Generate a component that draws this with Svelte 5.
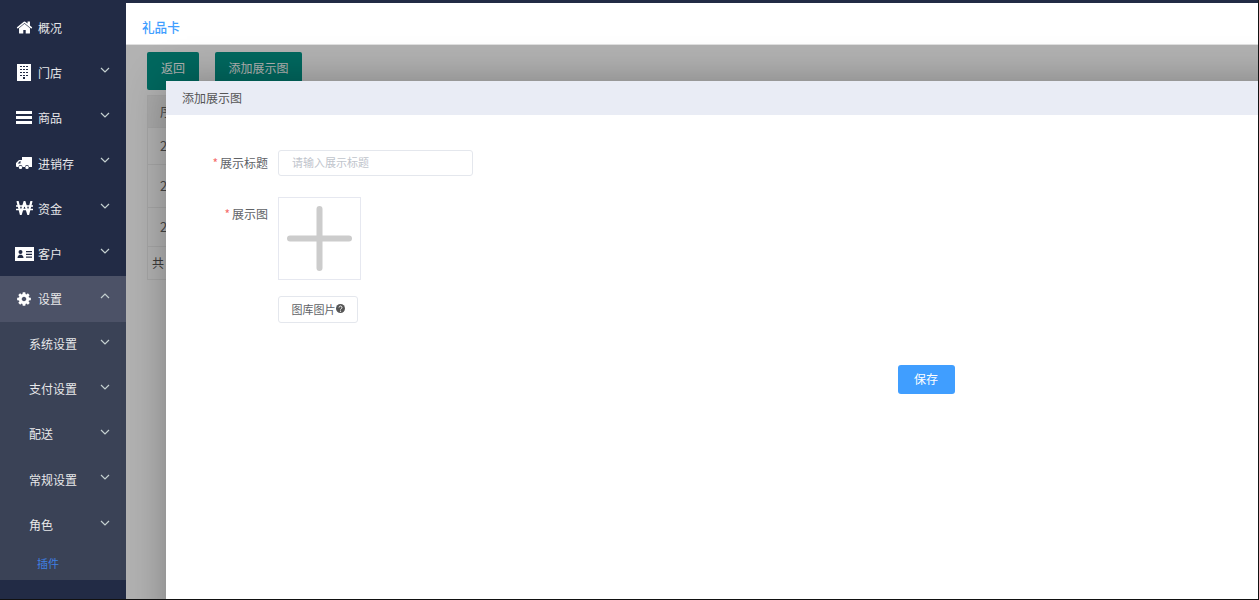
<script>
  const menu = [
    { name: "概况", icon: "home", noArrow: true },
    { name: "门店", icon: "building" },
    { name: "商品", icon: "bars" },
    { name: "进销存", icon: "truck" },
    { name: "资金", icon: "won" },
    { name: "客户", icon: "card" }
  ];
  const subMenu = ["系统设置", "支付设置", "配送", "常规设置", "角色"];
  const cog = "M1152 896q0-106-75-181t-181-75-181 75-75 181 75 181 181 75 181-75 75-181zm512-109v222q0 12-8 23t-20 13l-185 28q-19 54-39 91 35 50 107 138 10 12 10 25t-9 23q-27 37-99 108t-94 71q-12 0-26-9l-138-108q-44 23-91 38-16 136-29 186-7 28-36 28h-222q-14 0-24.5-8.5t-11.5-21.5l-28-184q-49-16-90-37l-141 107q-10 9-25 9-14 0-25-11-126-114-165-168-7-10-7-23 0-12 8-23 15-21 51-66.5t54-70.5q-27-50-41-99l-183-27q-13-2-21-12.5t-8-23.5v-222q0-12 8-23t19-13l186-28q14-46 39-92-40-57-107-138-10-12-10-24 0-10 9-23 26-36 98.5-107.5t94.5-71.5q13 0 26 10l138 107q44-23 91-38 16-136 29-186 7-28 36-28h222q14 0 24.5 8.5t11.5 21.5l28 184q49 16 90 37l142-107q9-9 24-9 13 0 25 10 129 119 165 170 7 8 7 22 0 12-8 23-15 21-51 66.5t-54 70.5q26 50 41 98l183 28q13 2 21 12.5t8 23.5z";
  const home = "M1472 992v480q0 26-19 45t-45 19h-384v-384h-256v384h-384q-26 0-45-19t-19-45v-480q0-1 .5-3t.5-3l575-474 575 474q1 2 1 6zm223-69l-62 74q-8 9-21 11h-3q-13 0-21-7l-692-577-692 577q-12 8-24 7-13-2-21-11l-62-74q-8-10-7-23.5t11-21.5l719-599q32-26 76-26t76 26l244 204v-195q0-14 9-23t23-9h192q14 0 23 9t9 23v408l219 182q10 8 11 21.5t-7 23.5z";
  const rows = ["2", "2", "2"];
</script>

<div class="page">
  <aside class="side">
    {#each menu as item}
      <div class="row">
        <span class="ico">
          {#if item.icon === "home"}
            <svg width="17" height="17" viewBox="0 0 1792 1792"><path fill="#fff" d={home} /></svg>
          {:else if item.icon === "building"}
            <svg width="14" height="17" viewBox="0 0 14 17"><path fill="#fff" fill-rule="evenodd" d="M0 0h14v17H0zM3 2v1h2V2zm3 0v1h2V2zm3 0v1h2V2zM3 5v1h2V5zm3 0v1h2V5zm3 0v1h2V5zM3 8v1h2V8zm3 0v1h2V8zm3 0v1h2V8zM3 11v1h2v-1zm3 0v1h2v-1zm3 0v1h2v-1zM6 13v2h2v-2z" /></svg>
          {:else if item.icon === "bars"}
            <svg width="16" height="13" viewBox="0 0 16 13"><path fill="#fff" d="M0 0h16v3H0zM0 5h16v3H0zM0 10h16v3H0z" /></svg>
          {:else if item.icon === "truck"}
            <svg width="16" height="13" viewBox="0 0 16 13"><path fill="#fff" fill-rule="evenodd" d="M6 0h9.500q.5 0 .5.500V10h-3a2 2 0 0 0-4 0H6.500a2 2 0 0 0-4 0H1q-1 0-1-1V6l3-3h3zM4 4 1.600 6.400H4.500V4zM4.500 8.700a1.700 1.700 0 1 1 0 3.400 1.700 1.700 0 0 1 0-3.400zM11 8.700a1.700 1.700 0 1 1 0 3.400 1.700 1.700 0 0 1 0-3.400z" /></svg>
          {:else if item.icon === "won"}
            <svg width="17" height="14" viewBox="0 0 17 14"><path fill="none" stroke="#fff" stroke-width="2.200" d="M1.500 0 4.800 13 8.500 1 12.200 13 15.500 0" /><path fill="none" stroke="#fff" stroke-width="1.500" d="M0 5h17M0 8.500h17" /></svg>
          {:else}
            <svg width="19" height="14" viewBox="0 0 19 14"><path fill="#fff" fill-rule="evenodd" d="M0 0h19v14H0zM5.500 3a2 2 0 1 0 0 4 2 2 0 0 0 0-4zM2.500 11h6c0-2-1-3.300-3-3.300s-3 1.300-3 3.300zM11 4v1.300h6V4zm0 2.700V8h6V6.700zm0 2.700v1.300h6V9.400z" /></svg>
          {/if}
        </span>
        <span>{item.name}</span>
        {#if !item.noArrow}
          <svg class="arrow" width="10" height="6" viewBox="0 0 10 6"><path d="M1 1l4 4 4-4" /></svg>
        {/if}
      </div>
    {/each}

    <div class="row active">
      <span class="ico">
        <svg width="16" height="16" viewBox="0 0 1792 1792"><path fill="#fff" d={cog} /></svg>
      </span>
      <span>设置</span>
      <svg class="arrow" width="10" height="6" viewBox="0 0 10 6"><path d="M1 5l4-4 4 4" /></svg>
    </div>

    <div class="sub">
      {#each subMenu as name}
        <div class="row subrow">
          <span>{name}</span>
          <svg class="arrow" width="10" height="6" viewBox="0 0 10 6"><path d="M1 1l4 4 4-4" /></svg>
        </div>
      {/each}
      <div class="plugin">插件</div>
    </div>
  </aside>

  <main class="main">
    <header class="head">礼品卡</header>
    <section class="content">
      <div class="btns">
        <button class="green">返回</button>
        <button class="green wide">添加展示图</button>
      </div>
      <div class="table">
        <div class="cell th">序号</div>
        <div class="cell r1">{rows[0]}</div>
        <div class="cell r2">{rows[1]}</div>
        <div class="cell r3">{rows[2]}</div>
        <div class="cell foot">共 3 条</div>
      </div>
    </section>

    <div class="shade"></div>

    <div class="modal">
      <div class="title">添加展示图</div>
      <form class="form" on:submit|preventDefault>
        <div class="field">
          <label class="label" for="title"><i>*</i>展示标题</label>
          <input id="title" class="input" type="text" placeholder="请输入展示标题" />
        </div>
        <div class="field second">
          <span class="label tall"><i>*</i>展示图</span>
          <div>
            <div class="upload">
              <svg width="65" height="65" viewBox="0 0 65 65"><path d="M32.500 3v59M3 32.500h59" stroke="#ccc" stroke-width="6" stroke-linecap="round" /></svg>
            </div>
            <button type="button" class="lib">
              图库图片
              <svg width="9" height="9" viewBox="0 0 10 10"><circle cx="5" cy="5" r="5" fill="#555" /><path d="M3.400 3.900a1.600 1.600 0 1 1 2.500 1.300c-.6.400-.9.600-.9 1.100" fill="none" stroke="#fff" stroke-width="1.100" /><circle cx="5" cy="8" r=".7" fill="#fff" /></svg>
            </button>
          </div>
        </div>
        <div class="actions">
          <button type="submit" class="save">保存</button>
        </div>
      </form>
    </div>
  </main>
</div>

<style>
  :global(body) {
    margin: 0;
    background: #fff;
  }
  .page {
    display: flex;
    height: 600px;
    overflow: hidden;
    box-sizing: border-box;
    border-right: 1px solid #111;
    border-bottom: 1px solid #111;
    font-family: "Noto Sans CJK SC", "Liberation Sans", sans-serif;
    font-size: 12px;
  }
  .side {
    width: 126px;
    flex: none;
    background: #222b45;
    color: #e8e8ea;
    padding-top: 4.500px;
    box-sizing: border-box;
  }
  .row {
    height: 45.300px;
    box-sizing: border-box;
    display: flex;
    align-items: center;
    padding-left: 14px;
    position: relative;
  }
  .ico {
    width: 20px;
    margin-right: 4px;
    display: flex;
    justify-content: center;
    align-items: center;
  }
  .arrow {
    position: absolute;
    left: 100px;
    top: 17px;
  }
  .arrow path {
    fill: none;
    stroke: #c4d0d0;
    stroke-width: 1.200;
  }
  .active {
    background: #4c5267;
  }
  .sub {
    background: #3a4256;
    height: 258.400px;
  }
  .subrow {
    padding-left: 29px;
    padding-bottom: 2px;
  }
  .plugin {
    height: 32px;
    line-height: 31px;
    padding-left: 37px;
    font-size: 11px;
    color: #3f80e4;
  }
  .main {
    flex: 1;
    min-width: 0;
    position: relative;
    background: #fff;
    border-top: 3px solid #222b45;
  }
  .head {
    height: 41px;
    line-height: 48px;
    box-sizing: border-box;
    padding-left: 16px;
    color: #409eff;
    font-size: 12.600px;
    font-weight: 500;
  }
  .content {
    padding: 8px 21px 0;
    width: 1400px;
  }
  .btns {
    display: flex;
    gap: 16px;
    height: 43px;
  }
  .green {
    width: 52px;
    height: 38px;
    border: 0;
    border-radius: 2px;
    background: #009688;
    color: #fff;
    font: inherit;
    padding: 0;
    line-height: 32px;
    display: block;
    text-align: center;
    align-self: flex-start;
    padding-bottom: 7px;
  }
  .wide {
    width: 87px;
  }
  .table {
    border: 1px solid #eee;
    color: #666;
    font-size: 13px;
  }
  .cell {
    padding-left: 12px;
    padding-bottom: 2px;
    display: flex;
    align-items: center;
    border-bottom: 1px solid #eee;
    box-sizing: border-box;
  }
  .th {
    height: 32px;
    background: #f2f2f2;
  }
  .r1 {
    height: 37px;
  }
  .r2 {
    height: 43px;
  }
  .r3 {
    height: 39px;
  }
  .foot {
    height: 32px;
    padding-left: 4px;
    border-bottom: 0;
    color: #555;
    font-size: 12px;
  }
  .shade {
    position: absolute;
    left: 0;
    right: 0;
    top: 41px;
    bottom: 0;
    background: rgba(0, 0, 0, 0.3);
    border-top: 1px solid #e0e0e0;
  }
  .modal {
    position: absolute;
    left: 40px;
    top: 78px;
    width: 1520px;
    height: 560px;
    background: #fff;
    box-shadow: 1px 1px 40px rgba(0, 0, 0, 0.3);
  }
  .title {
    height: 34px;
    line-height: 34px;
    padding-left: 16px;
    background: #e9ecf5;
    color: #555;
  }
  .form {
    padding-top: 35px;
  }
  .field {
    display: flex;
    align-items: flex-start;
    gap: 10px;
  }
  .second {
    margin-top: 21px;
  }
  .label {
    width: 102px;
    flex: none;
    text-align: right;
    line-height: 26px;
    color: #606266;
  }
  .tall {
    line-height: 34px;
  }
  .label i {
    color: #f56c6c;
    font-style: normal;
    margin-right: 2px;
  }
  .input {
    width: 195px;
    height: 26px;
    box-sizing: border-box;
    border: 1px solid #e4e7ed;
    border-radius: 3px;
    padding: 0 13px 2px;
    font: inherit;
    font-size: 11px;
    outline: none;
  }
  .input::placeholder {
    color: #c0c4cc;
  }
  .upload {
    width: 83px;
    height: 83px;
    box-sizing: border-box;
    border: 1px solid #e6e8f0;
    display: flex;
    align-items: center;
    justify-content: center;
  }
  .lib {
    margin-top: 16px;
    width: 80px;
    height: 27px;
    box-sizing: border-box;
    background: #fff;
    border: 1px solid #e4e7ed;
    border-radius: 3px;
    color: #606266;
    font: inherit;
    font-size: 11px;
    padding: 0 0 2px;
    display: flex;
    align-items: center;
    justify-content: center;
    gap: 0;
  }
  .actions {
    margin-top: 42px;
    text-align: center;
  }
  .save {
    width: 57px;
    height: 29px;
    border: 0;
    border-radius: 3px;
    background: #409eff;
    color: #fff;
    font: inherit;
    padding: 0 0 2px;
  }
</style>
